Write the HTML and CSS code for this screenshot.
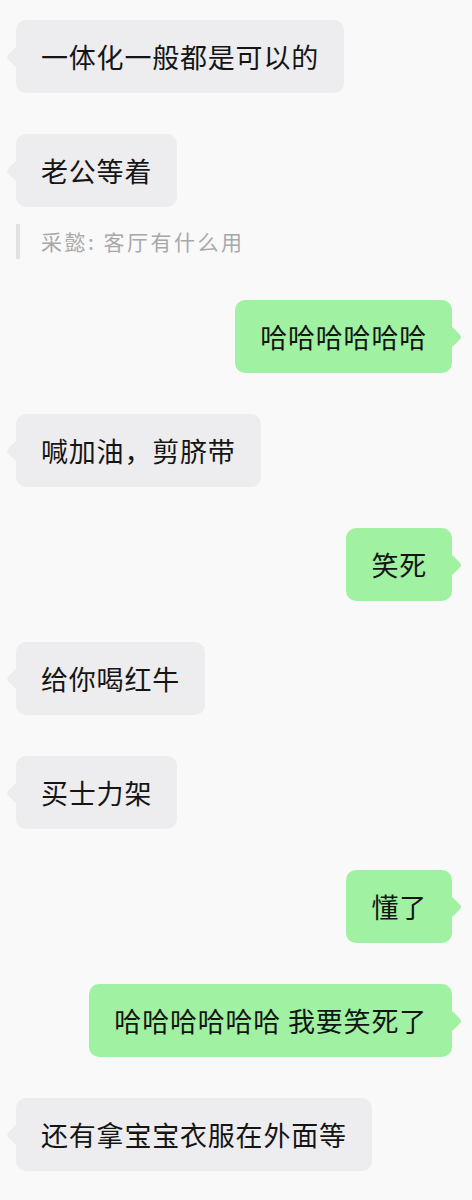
FILE: index.html
```html
<!DOCTYPE html>
<html lang="zh-CN">
<head>
  <meta charset="UTF-8">
  <meta name="viewport" content="width=device-width, initial-scale=1.0">
  <title>聊天记录</title>
  <link rel="stylesheet" href="styles.css">
</head>
<body>
  <div class="chat">
    <div class="msg left"><div class="bubble">一体化一般都是可以的</div></div>
    <div class="msg left">
      <div class="bubble">老公等着</div>
      <div class="quote">采懿: 客厅有什么用</div>
    </div>
    <div class="msg right"><div class="bubble">哈哈哈哈哈哈</div></div>
    <div class="msg left"><div class="bubble">喊加油，剪脐带</div></div>
    <div class="msg right"><div class="bubble">笑死</div></div>
    <div class="msg left"><div class="bubble">给你喝红牛</div></div>
    <div class="msg left"><div class="bubble">买士力架</div></div>
    <div class="msg right"><div class="bubble">懂了</div></div>
    <div class="msg right"><div class="bubble">哈哈哈哈哈哈 我要笑死了</div></div>
    <div class="msg left"><div class="bubble">还有拿宝宝衣服在外面等</div></div>
  </div>
</body>
</html>
```

FILE: styles.css
```css
body {
  margin: 0;
  padding: 0;
  background-color: #f9f9f9;
  font-family: "Noto Sans CJK SC", "Noto Sans", sans-serif;
  color: #151515;
}
.chat {
  display: flex;
  flex-direction: column;
  gap: 41px;
  padding: 20px 20px 40px 16px;
}
.msg {
  display: flex;
  flex-direction: column;
}
.msg.left {
  align-items: flex-start;
}
.msg.right {
  align-items: flex-end;
}
.bubble {
  position: relative;
  padding: 18px 25px;
  font-size: 27px;
  line-height: 37px;
  letter-spacing: 0.8px;
  border-radius: 10px;
  white-space: nowrap;
}
.bubble::before {
  content: "";
  position: absolute;
  top: 50%;
  width: 16px;
  height: 16px;
  margin-top: -8px;
  border-radius: 4px;
  transform: rotate(45deg);
}
.left .bubble {
  background-color: #ededef;
}
.left .bubble::before {
  left: -7px;
  background-color: #ededef;
}
.right .bubble {
  background-color: #a0f1a1;
}
.right .bubble::before {
  right: -7px;
  background-color: #a0f1a1;
}
.quote {
  margin-top: 17px;
  padding: 2px 0 2px 21px;
  border-left: 4px solid #e2e2e4;
  font-size: 21px;
  line-height: 31px;
  letter-spacing: 2.5px;
  color: #a8a8ab;
}
```
